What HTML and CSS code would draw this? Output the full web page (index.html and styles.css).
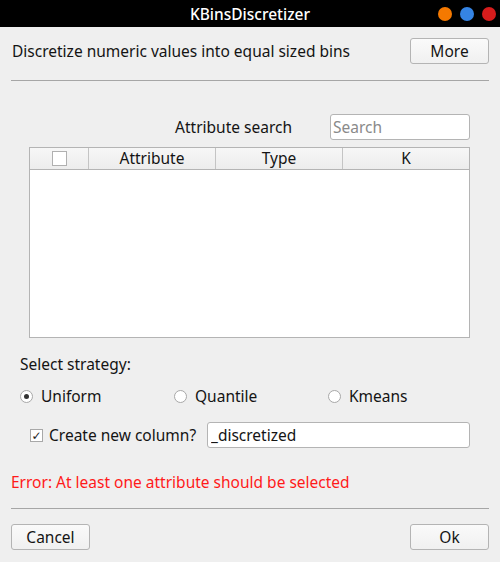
FILE: index.html
```html
<!DOCTYPE html>
<html>
<head>
<meta charset="utf-8">
<link rel="stylesheet" href="styles.css">
</head>
<body>
<div class="window">
  <div class="titlebar">
    <div></div>
    <div class="title">KBinsDiscretizer</div>
    <div class="controls">
      <span class="dot orange"></span>
      <span class="dot blue"></span>
      <span class="dot red"></span>
    </div>
  </div>
  <div class="content">
    <div class="header">
      <span class="desc">Discretize numeric values into equal sized bins</span>
      <button class="btn">More</button>
    </div>
    <div class="sep sep-top"></div>
    <div class="attrs">
      <div class="search-row">
        <span class="search-label">Attribute search</span>
        <input class="search" type="text" placeholder="Search">
      </div>
      <div class="table">
        <div class="thead">
          <div class="th th-check"><span class="box"></span></div>
          <div class="th">Attribute</div>
          <div class="th">Type</div>
          <div class="th th-last">K</div>
        </div>
        <div class="tbody"></div>
      </div>
    </div>
    <div class="strategy-label">Select strategy:</div>
    <div class="radios">
      <label class="radio"><span class="rb checked"></span>Uniform</label>
      <label class="radio"><span class="rb"></span>Quantile</label>
      <label class="radio"><span class="rb"></span>Kmeans</label>
    </div>
    <div class="newcol">
      <label class="check"><span class="cb">✓</span>Create new column?</label>
      <input class="suffix" type="text" value="_discretized">
    </div>
    <div class="error">Error: At least one attribute should be selected</div>
    <div class="sep sep-bottom"></div>
    <div class="footer">
      <button class="btn">Cancel</button>
      <button class="btn">Ok</button>
    </div>
  </div>
</div>
</body>
</html>
```

FILE: styles.css
```css
* { box-sizing: border-box; }
html, body { margin: 0; padding: 0; }
body {
  width: 500px;
  height: 562px;
  background: #efefef;
  font-family: "Noto Sans", "DejaVu Sans", sans-serif;
  font-size: 15.5px;
  color: #141414;
  overflow: hidden;
}
.window { width: 500px; height: 562px; background: #efefef; }
.titlebar {
  height: 27px;
  background: #000;
  display: grid;
  grid-template-columns: 1fr auto 1fr;
  align-items: center;
}
.title {
  color: #fff;
  font-size: 15.5px;
  font-weight: 500;
}
.controls {
  display: flex;
  justify-content: flex-end;
  gap: 8px;
  padding-right: 4px;
}
.dot { width: 14px; height: 14px; border-radius: 50%; display: block; }
.orange { background: #f57900; }
.blue { background: #3584e4; }
.red { background: #d61c1c; }

.content { padding: 0 11px; }
.header {
  display: flex;
  justify-content: space-between;
  align-items: center;
  margin-top: 11px;
  height: 26px;
}
.desc { padding-left: 1px; }
.btn {
  width: 79px;
  height: 26px;
  background: linear-gradient(#fafafa, #f0f0f0);
  border: 1px solid #b4b4b4;
  border-radius: 3px;
  font-family: inherit;
  font-size: 15.5px;
  color: #141414;
  padding: 0;
}
.sep { height: 1px; background: #a6a6a6; }
.sep-top { margin-top: 16px; }

.attrs { padding: 0 19px 0 18px; }
.search-row {
  display: flex;
  justify-content: flex-end;
  align-items: center;
  gap: 38px;
  margin-top: 33px;
  height: 26px;
}
.search {
  width: 140px;
  height: 26px;
  border: 1px solid #b4b4b4;
  border-radius: 3px;
  background: #fff;
  font-family: inherit;
  font-size: 15.5px;
  padding: 0 2px;
  color: #141414;
}
.search::placeholder { color: #8a8a8a; }
.table {
  margin-top: 7px;
  height: 191px;
  border: 1px solid #b4b4b4;
  background: #fff;
  display: flex;
  flex-direction: column;
}
.thead {
  height: 22px;
  display: grid;
  grid-template-columns: 59px 127px 127px 1fr;
  background: linear-gradient(#f7f7f7, #ececec);
  border-bottom: 1px solid #b4b4b4;
}
.th {
  display: flex;
  align-items: center;
  justify-content: center;
  border-right: 1px solid #c4c4c4;
  line-height: 1;
}
.th-last { border-right: none; }
.box {
  width: 15px;
  height: 15px;
  border: 1px solid #b0b0b0;
  background: #fff;
  display: block;
}
.tbody { flex: 1; }

.strategy-label { margin-top: 16px; padding-left: 9px; height: 20px; line-height: 20px; }
.radios {
  display: grid;
  grid-template-columns: 154px 154px 1fr;
  margin-top: 11px;
  padding-left: 9px;
  height: 20px;
  align-items: center;
}
.radio { display: flex; align-items: center; gap: 8px; }
.rb {
  width: 13px;
  height: 13px;
  border-radius: 50%;
  border: 1px solid #a8a8a8;
  background: #fff;
  display: flex;
  align-items: center;
  justify-content: center;
}
.rb.checked::after {
  content: "";
  width: 5px;
  height: 5px;
  border-radius: 50%;
  background: #333;
}
.newcol {
  display: flex;
  align-items: center;
  margin-top: 17px;
  padding: 0 19px 0 19px;
  height: 26px;
}
.check { display: flex; align-items: center; gap: 6px; }
.cb {
  width: 13px;
  height: 13px;
  border: 1px solid #a8a8a8;
  background: #fff;
  font-size: 12px;
  line-height: 11px;
  text-align: center;
  color: #222;
  display: block;
}
.suffix {
  margin-left: auto;
  width: 263px;
  height: 26px;
  border: 1px solid #b4b4b4;
  border-radius: 3px;
  background: #fff;
  font-family: inherit;
  font-size: 15.5px;
  padding: 0 3px;
  color: #141414;
}
.error {
  color: #ff1a1a;
  margin-top: 24px;
  height: 20px;
  line-height: 20px;
}
.sep-bottom { margin-top: 16px; }
.footer {
  display: flex;
  justify-content: space-between;
  margin-top: 15px;
}
```
